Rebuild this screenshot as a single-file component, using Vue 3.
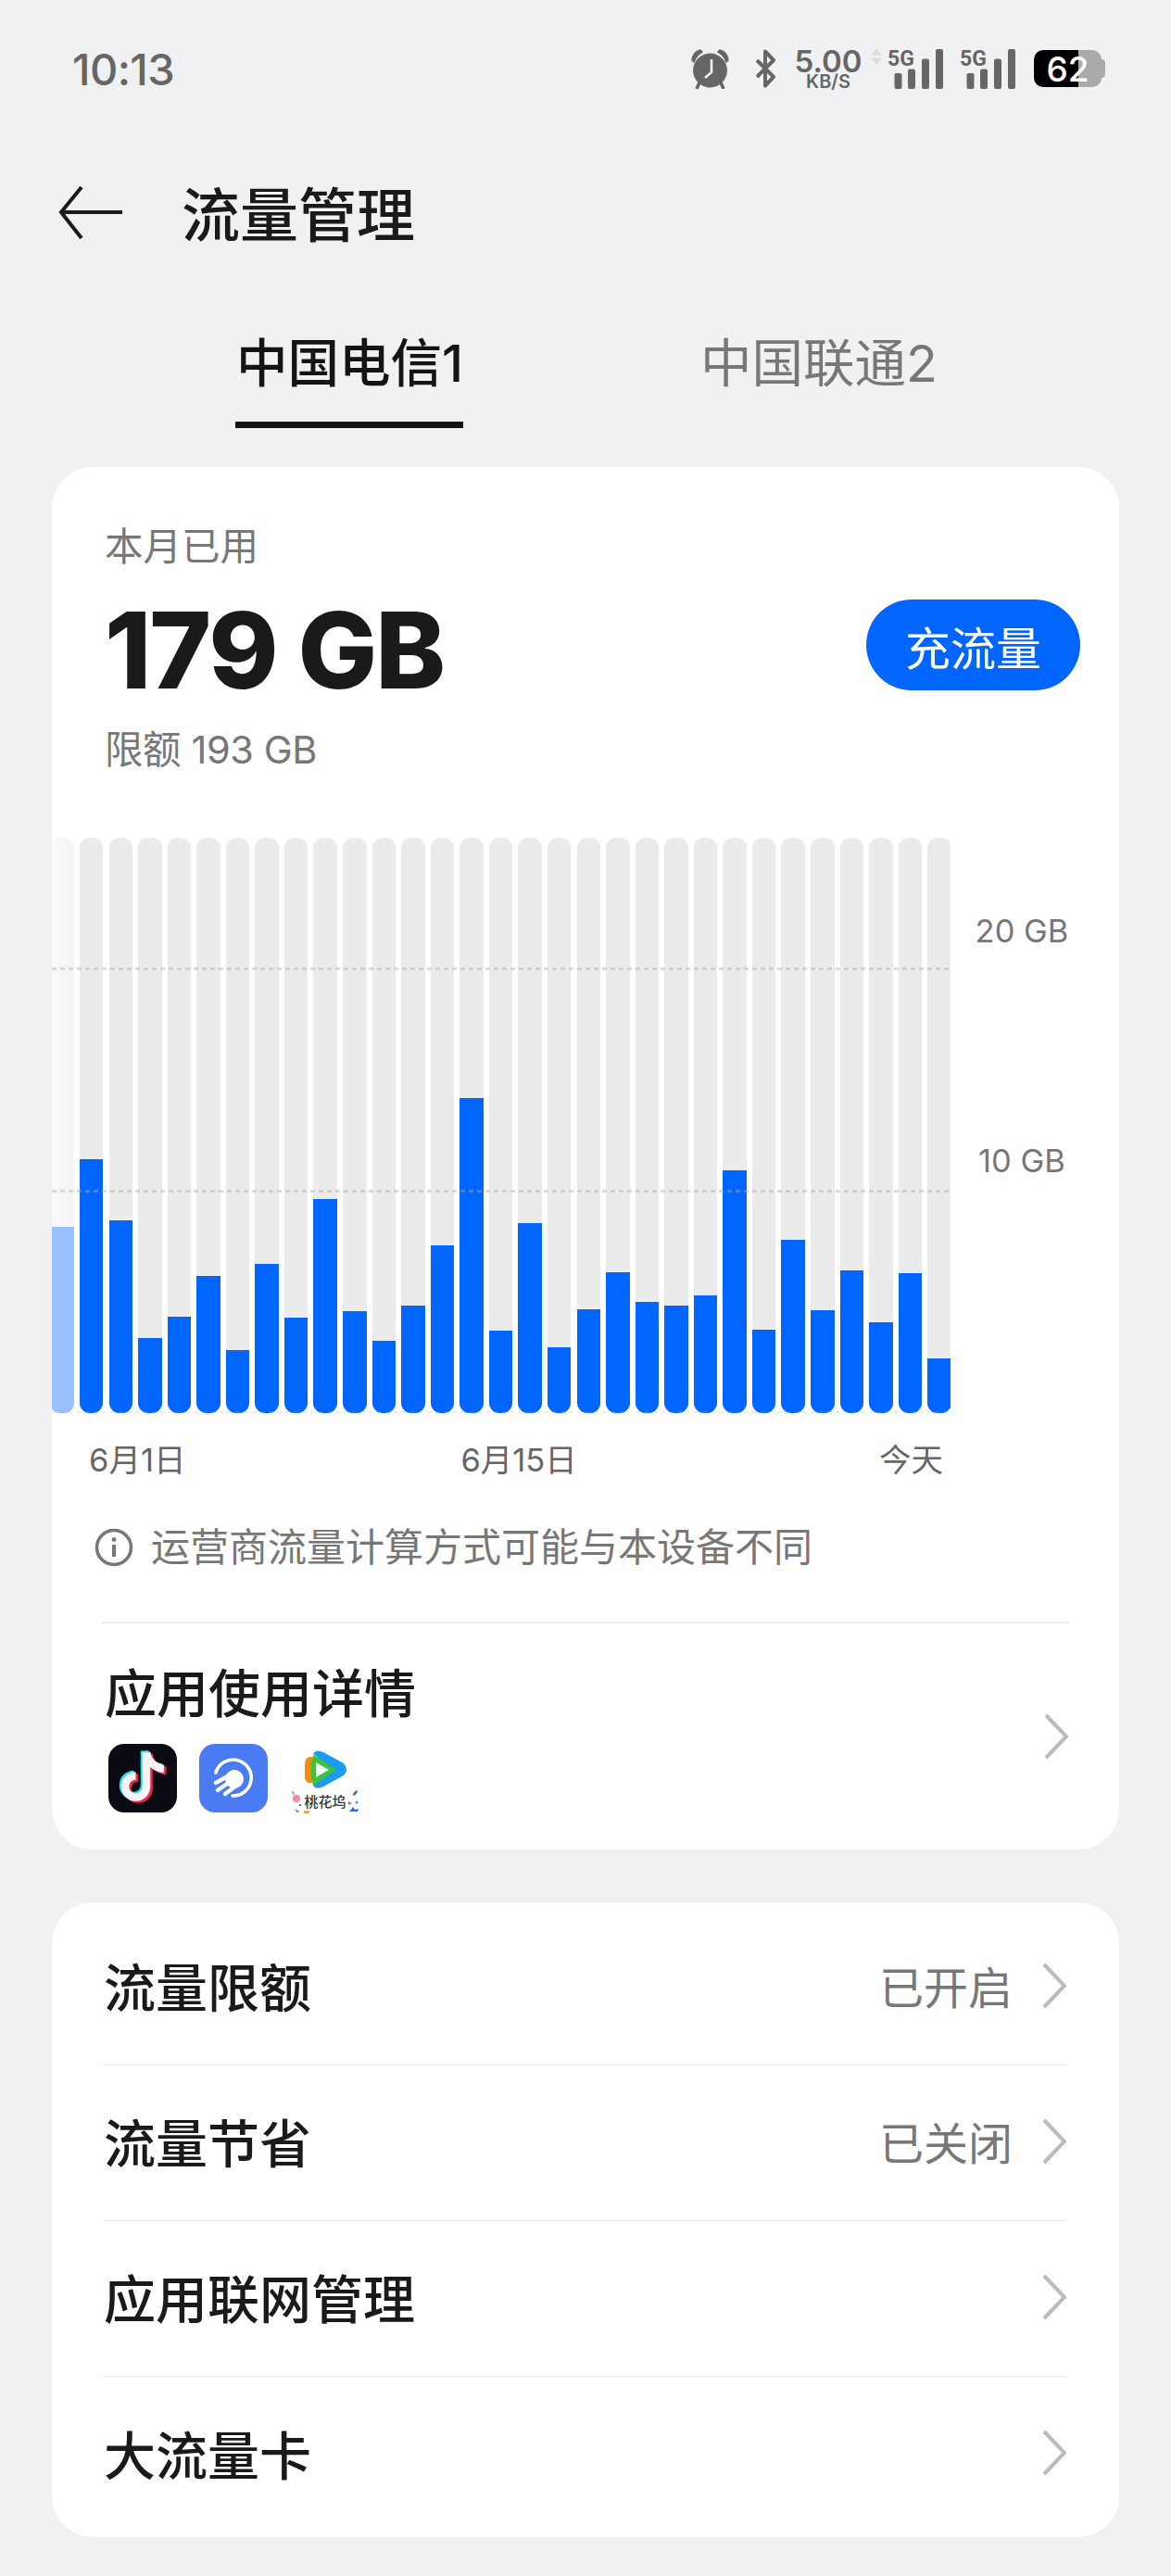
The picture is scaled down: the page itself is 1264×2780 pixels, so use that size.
<template>
  <div class="page">
    <div class="status-bar">
      <span class="clock">10:13</span>
      <div class="status-icons">
        <svg class="alarm" viewBox="0 0 43 44">
          <path d="M2 13 Q3 4 11 2 L13 4 Q6 8 4 15 Z M41 13 Q40 4 32 2 L30 4 Q37 8 39 15 Z" fill="#666" stroke="#666" stroke-width="1.5" stroke-linejoin="round" />
          <path d="M10 37 L7 44 M33 37 L36 44" stroke="#666" stroke-width="3.5" />
          <circle cx="21.5" cy="24" r="18.5" fill="#666" />
          <path d="M23 12 V26 L16 32" fill="none" stroke="#f0f1f3" stroke-width="2.6" />
        </svg>
        <svg class="bluetooth" viewBox="0 0 24 42">
          <path d="M3 12 L21 30 L12 39.5 V2.5 L21 12 L3 30" fill="none" stroke="#666" stroke-width="4" stroke-linejoin="round" />
        </svg>
        <div class="speed">
          <span class="speed-num">5.00</span>
          <span class="speed-unit">KB/S</span>
        </div>
        <svg class="updown" viewBox="0 0 12 18">
          <path d="M6 0 L12 7.5 H0 Z" fill="#dcdcdc" />
          <path d="M6 18 L12 10.5 H0 Z" fill="#dcdcdc" />
        </svg>
        <svg v-for="n in 2" :key="n" class="signal" viewBox="0 0 60 43">
          <text x="0" y="17.5" class="sig-text">5G</text>
          <rect x="7.5" y="26" width="8" height="17" rx="2" fill="#666" />
          <rect x="22" y="21.5" width="8" height="21.5" rx="2" fill="#666" />
          <rect x="37" y="10.5" width="8" height="32.5" rx="2" fill="#666" />
          <rect x="52" y="0" width="8" height="43" rx="2" fill="#666" />
        </svg>
        <div class="battery"><span>62</span></div>
      </div>
    </div>

    <div class="header">
      <svg class="back" viewBox="0 0 72 60">
        <path d="M70 29 H6 M26 2 L4 29 L26 57" fill="none" stroke="#1a1a1a" stroke-width="4" />
      </svg>
      <h1>流量管理</h1>
    </div>

    <div class="tabs">
      <div class="tab active">
        <span class="tab-label">中国电信1</span>
        <i class="tab-line"></i>
      </div>
      <div class="tab">
        <span class="tab-label">中国联通2</span>
      </div>
    </div>

    <section class="card usage">
      <div class="summary">
        <div class="summary-text">
          <div class="muted-line">本月已用</div>
          <div class="amount">179 GB</div>
          <div class="muted-line limit">限额 193 GB</div>
        </div>
        <button class="recharge">充流量</button>
      </div>

      <div class="chart">
        <div class="plot">
          <div class="bars">
            <div
              v-for="(h, i) in bars"
              :key="i"
              class="bar"
              :class="{ faded: i === 0 }"
            >
              <div class="bar-fill" :style="{ height: h + 'px' }"></div>
            </div>
          </div>
          <i
            v-for="g in grid"
            :key="g.top"
            class="gridline"
            :style="{ top: g.top + 'px', opacity: g.alpha }"
          ></i>
        </div>
        <div class="axis">
          <span>20 GB</span>
          <span>10 GB</span>
        </div>
      </div>

      <div class="dates">
        <span>6月1日</span>
        <span>6月15日</span>
        <span>今天</span>
      </div>

      <div class="note">
        <svg class="info" viewBox="0 0 42 42">
          <circle cx="21" cy="21" r="18.5" fill="none" stroke="#777" stroke-width="3.6" />
          <circle cx="21" cy="12.5" r="2.4" fill="#777" />
          <rect x="19" y="18" width="4" height="13" fill="#777" />
        </svg>
        <span>运营商流量计算方式可能与本设备不同</span>
      </div>

      <div class="divider"></div>

      <div class="details">
        <div class="details-left">
          <div class="details-title">应用使用详情</div>
          <div class="apps">
            <svg class="app" viewBox="0 0 74 74">
              <rect width="74" height="74" rx="17" fill="#0b0b14" />
              <g fill="none" stroke-width="8.5">
                <g stroke="#27e0e6" transform="translate(-2 -1.5)">
                  <path d="M41 9 V46 a11.5 11.5 0 1 1 -11.5 -11.5" />
                  <path d="M41 9 c1 9 9 17 19 18" />
                </g>
                <g stroke="#f0264f" transform="translate(2.5 2)">
                  <path d="M41 9 V46 a11.5 11.5 0 1 1 -11.5 -11.5" />
                  <path d="M41 9 c1 9 9 17 19 18" />
                </g>
                <g stroke="#f4f4f4">
                  <path d="M41 9 V46 a11.5 11.5 0 1 1 -11.5 -11.5" />
                  <path d="M41 9 c1 9 9 17 19 18" />
                </g>
              </g>
            </svg>
            <svg class="app" viewBox="0 0 74 74">
              <rect width="74" height="74" rx="17" fill="#4a7bf3" />
              <path d="M18 31 A19.5 19.5 0 1 1 36 56" fill="none" stroke="#fff" stroke-width="3.6" stroke-linecap="round" />
              <circle cx="38" cy="38" r="10" fill="#fff" />
              <path d="M18 42 L34 33 M20 50 L36 39 M28 54 L40 45" fill="none" stroke="#fff" stroke-width="4.4" stroke-linecap="round" />
            </svg>
            <svg class="app tv" viewBox="8 5 75 76">
              <path d="M32 19 Q24 18 24 28 V39 Q24 49 32 47 Z" fill="#f58a0b" />
              <path d="M33 17 L66 33 L33 50 Q28 34 33 17 Z" fill="#3cc43c" />
              <path d="M33 16 Q36 10 44 14 L66 26 Q72 33 66 39 L44 51 Q36 55 33 50 L58 33 Z" fill="#1d9bf0" />
              <path d="M36 25 L50 33 L36 41 Z" fill="#fff" />
              <circle cx="15" cy="64" r="4.2" fill="#f58ab0" />
              <path d="M10 56 Q13 56 13 60 Q10 60 10 56 Z" fill="#7dc67d" />
              <path d="M81 55 Q81 60 76 61 Q76 56 81 55 Z" fill="#2e8b6a" />
              <path d="M72 78 q3 -3 4 -5 l2 3 l4 -1 l-1 3 Z" fill="#3b62d6" />
              <path d="M23 77 h6 v3 h-6 Z" fill="#f2a45c" />
              <path d="M13 75 l5 3 l-2 1 Z" fill="#3b62d6" />
              <circle cx="80" cy="68" r="1.6" fill="#4a9be8" />
              <path d="M71 67 l4 2 l-4 2 Z" fill="#e8556f" />
              <circle cx="19" cy="71" r="1" fill="#333" />
              <text x="23.5" y="73" class="tv-text">桃花坞</text>
            </svg>
          </div>
        </div>
        <svg class="chevron tall" viewBox="0 0 26 50">
          <path d="M2 2 L24 25 L2 48" fill="none" stroke="#bbb" stroke-width="4" />
        </svg>
      </div>
    </section>

    <section class="card settings">
      <div v-for="row in rows" :key="row.label" class="row">
        <span class="row-label">{{ row.label }}</span>
        <span v-if="row.value" class="row-value">{{ row.value }}</span>
        <svg class="chevron" viewBox="0 0 26 50">
          <path d="M2 2 L24 25 L2 48" fill="none" stroke="#bbb" stroke-width="4" />
        </svg>
      </div>
    </section>
  </div>
</template>

<script setup>
// heights in px, 24px = 1 GB
const bars = [
  201, 274, 208, 81, 104, 148, 68, 161, 103, 231, 110, 78, 116, 181, 340.5, 89,
  205, 71.5, 112, 152, 120, 116, 127, 262, 90, 187, 111, 154, 98, 151, 59,
]

const grid = [
  { top: 140, alpha: 1 },
  { top: 380, alpha: 1 },
  { top: 619, alpha: 0.5 },
]

const rows = [
  { label: '流量限额', value: '已开启' },
  { label: '流量节省', value: '已关闭' },
  { label: '应用联网管理', value: '' },
  { label: '大流量卡', value: '' },
]
</script>

<style>
body {
  margin: 0;
  background: #f0f1f3;
}
</style>

<style scoped>
.page {
  min-height: 2780px;
  background: #f0f1f3;
  font-family: Inter, "Noto Sans CJK SC", sans-serif;
  color: #1a1a1a;
  overflow: hidden;
}

.status-bar {
  height: 148px;
  padding: 0 71px 0 78px;
  display: flex;
  align-items: center;
  justify-content: space-between;
  color: #666;
}
.clock { font-size: 47px; font-weight: 500; letter-spacing: -0.6px; }
.status-icons { display: flex; align-items: center; }
.alarm { width: 43px; height: 44px; }
.bluetooth { width: 24px; height: 42px; margin-left: 26px; }
.speed {
  width: 68px;
  margin-left: 22px;
  display: flex;
  flex-direction: column;
  align-items: center;
  font-weight: 600;
  white-space: nowrap;
}
.speed-num { font-size: 33px; line-height: 28px; }
.speed-unit { font-size: 20px; line-height: 17px; }
.updown { width: 12px; height: 18px; margin-left: 12px; align-self: flex-start; }
.signal { width: 60px; height: 43px; margin-left: 6px; overflow: visible; }
.signal + .signal { margin-left: 18px; }
.sig-text { font-family: Roboto, sans-serif; font-size: 23px; font-weight: 700; fill: #666; }
.battery {
  position: relative;
  width: 73px;
  height: 40px;
  margin-left: 20px;
  margin-right: 4px;
  border-radius: 10px;
  background: linear-gradient(90deg, #000 48px, #aaa 48px);
  display: flex;
  align-items: center;
  justify-content: center;
  color: #fff;
  font-size: 37px;
  font-weight: 500;
}
.battery::after {
  content: "";
  position: absolute;
  right: -4px;
  top: 10px;
  width: 4px;
  height: 20px;
  border-radius: 0 4px 4px 0;
  background: #aaa;
}

.header {
  height: 164px;
  padding-left: 62px;
  display: flex;
  align-items: center;
}
.back { width: 72px; height: 60px; }
h1 { margin: 0 0 0 62px; font-size: 63px; font-weight: 500; line-height: 70px; position: relative; top: 2px; }

.tabs { height: 150px; display: flex; padding-left: 254px; }
.tab { width: 246px; padding-top: 45px; display: flex; flex-direction: column; align-items: flex-end; }
.tab + .tab { width: 254px; margin-left: 256px; align-items: flex-start; }
.tab-label { font-size: 55.5px; line-height: 70px; color: #777; white-space: nowrap; }
.active .tab-label { color: #141414; font-weight: 500; }
.tab-line { display: block; width: 100%; height: 7px; margin-top: 28px; background: #141414; }

.card {
  margin: 0 56px;
  background: #fff;
  border-radius: 44px;
  overflow: hidden;
}
.usage { margin-top: 42px; height: 1492px; }

.summary { padding: 61px 42px 0 57px; display: flex; justify-content: space-between; }
.muted-line { font-size: 41.5px; line-height: 50px; color: #777; }
.amount { font-size: 114px; font-weight: 800; line-height: 120px; margin-top: 27px; color: #1a1a1a; letter-spacing: -2px; }
.limit { margin-top: 22px; letter-spacing: -0.4px; }
.recharge {
  width: 231px;
  height: 98px;
  margin-top: 82px;
  border: 0;
  border-radius: 49px;
  background: #0066ff;
  color: #fff;
  font-family: inherit;
  font-size: 49px;
  padding: 0;
}

.chart { margin-top: 70px; display: flex; }
.plot { position: relative; width: 970px; height: 621px; overflow: hidden; }
.bars { display: flex; gap: 6.07px; margin-left: -1.6px; height: 100%; }
.bar {
  flex: 0 0 25.5px;
  position: relative;
  background: #ebebeb;
  border-radius: 11px;
  overflow: hidden;
}
.bar.faded { background: linear-gradient(90deg, #fafafa, #f4f4f4); }
.bar-fill { position: absolute; left: 0; right: 0; bottom: 0; background: #0066ff; }
.bar.faded .bar-fill { background: #99c0ff; }
.gridline {
  position: absolute;
  left: 0;
  right: 0;
  height: 3px;
  background: repeating-linear-gradient(90deg, rgba(170, 170, 170, 0.42) 0 5px, transparent 5px 9px);
}
.axis {
  width: 98px;
  margin-left: 28px;
  padding-top: 79px;
  display: flex;
  flex-direction: column;
  gap: 204px;
  align-items: center;
  font-size: 34.5px;
  line-height: 44px;
  color: #777;
  white-space: nowrap;
}

.dates { margin-top: 29px; padding: 0 190px 0 40px; display: flex; font-size: 34.5px; line-height: 44px; color: #666; }
.dates span:nth-child(2) { margin-left: 297px; }
.dates span:nth-child(3) { margin-left: auto; }

.note { margin-top: 44px; padding-left: 46px; display: flex; align-items: center; gap: 19px; font-size: 42px; line-height: 56px; color: #777; }
.info { width: 42px; height: 42px; }

.divider { height: 2px; margin: 52px 55px 0 54px; background: #ececec; }

.details { padding: 41px 55px 0 61px; display: flex; justify-content: space-between; }
.details-title { margin-left: -4px; font-size: 56px; font-weight: 500; line-height: 70px; }
.apps { margin-top: 19px; display: flex; gap: 24px; }
.app { width: 74px; height: 74px; }
.tv { width: 75px; height: 76px; }
.tv-text { font-size: 15px; fill: #333; font-weight: 500; }
.chevron { width: 26px; height: 50px; flex: none; }
.tall { margin-top: 56px; }

.settings { margin-top: 57px; height: 685px; padding: 8px 56px 0 55px; box-sizing: border-box; }
.row {
  height: 168px;
  box-sizing: border-box;
  padding: 0 1px 0 1px;
  display: flex;
  align-items: center;
  border-bottom: 1.5px solid #e9e9e9;
}
.row:last-child { border-bottom: 0; }
.row-label { flex: 1; font-size: 56px; font-weight: 500; position: relative; top: -3px; }
.row-value { margin-right: 32px; font-size: 48px; color: #777; position: relative; top: -3px; }
.row .chevron { position: relative; top: -2px; }
</style>
